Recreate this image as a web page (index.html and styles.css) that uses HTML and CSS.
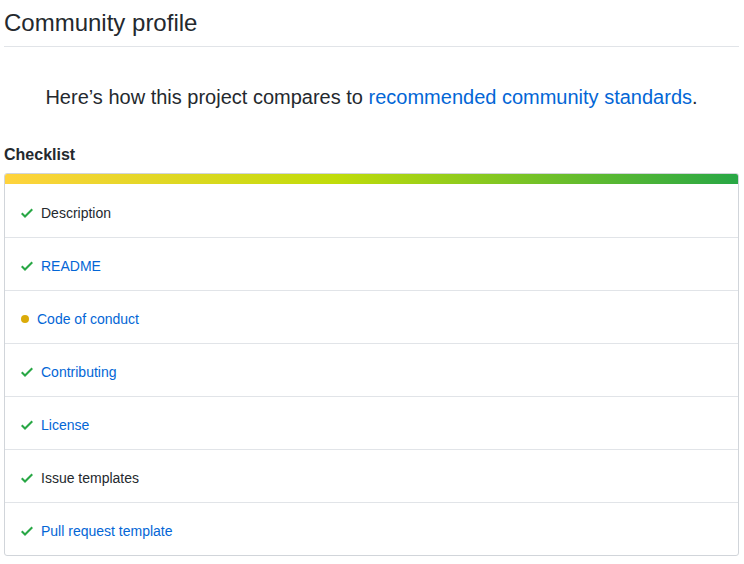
FILE: index.html
```html
<!DOCTYPE html>
<html>
<head>
<meta charset="utf-8">
<link rel="stylesheet" href="styles.css">
</head>
<body>
<div class="page">
  <h2 class="subhead">Community profile</h2>
  <p class="lead">Here’s how this project compares to <a href="#">recommended community standards</a>.</p>
  <h3 class="section-title">Checklist</h3>
  <div class="box">
    <div class="progress"></div>
    <ul class="list">
      <li class="row"><svg class="check" viewBox="0 0 12 16" width="12" height="16"><path d="M12 5l-8 8-4-4 1.5-1.5L4 10l6.5-6.5L12 5z"/></svg><span class="plain">Description</span></li>
      <li class="row"><svg class="check" viewBox="0 0 12 16" width="12" height="16"><path d="M12 5l-8 8-4-4 1.5-1.5L4 10l6.5-6.5L12 5z"/></svg><a href="#">README</a></li>
      <li class="row"><span class="dot"></span><a href="#">Code of conduct</a></li>
      <li class="row"><svg class="check" viewBox="0 0 12 16" width="12" height="16"><path d="M12 5l-8 8-4-4 1.5-1.5L4 10l6.5-6.5L12 5z"/></svg><a href="#">Contributing</a></li>
      <li class="row"><svg class="check" viewBox="0 0 12 16" width="12" height="16"><path d="M12 5l-8 8-4-4 1.5-1.5L4 10l6.5-6.5L12 5z"/></svg><a href="#">License</a></li>
      <li class="row"><svg class="check" viewBox="0 0 12 16" width="12" height="16"><path d="M12 5l-8 8-4-4 1.5-1.5L4 10l6.5-6.5L12 5z"/></svg><span class="plain">Issue templates</span></li>
      <li class="row"><svg class="check" viewBox="0 0 12 16" width="12" height="16"><path d="M12 5l-8 8-4-4 1.5-1.5L4 10l6.5-6.5L12 5z"/></svg><a href="#">Pull request template</a></li>
    </ul>
  </div>
</div>
</body>
</html>
```
FILE: styles.css
```css
html, body {
  margin: 0;
  padding: 0;
  background: #fff;
}
body {
  font-family: "Liberation Sans", Arial, sans-serif;
  color: #24292e;
  font-size: 14px;
}
.page {
  padding: 8px 5px 0 4px;
}
a {
  color: #0366d6;
  text-decoration: none;
}
.subhead {
  margin: 0;
  font-size: 24px;
  font-weight: normal;
  line-height: 30px;
  padding-bottom: 8px;
  border-bottom: 1px solid #e1e4e8;
}
.lead {
  margin: 35px 0 0;
  text-align: center;
  font-size: 20px;
  line-height: 30px;
}
.section-title {
  margin: 33px 0 0;
  font-size: 16px;
  font-weight: bold;
  line-height: 20px;
}
.box {
  margin-top: 8px;
  border: 1px solid #d1d5da;
  border-radius: 3px;
  overflow: hidden;
}
.progress {
  height: 10px;
  background: linear-gradient(to right, #ffd33d 0%, #c0dc0a 45%, #28a745 100%);
}
.list {
  list-style: none;
  margin: 0;
  padding: 0;
}
.row {
  box-sizing: border-box;
  display: flex;
  align-items: center;
  height: 53px;
  padding: 4px 0 0 16px;
  border-top: 1px solid #e1e4e8;
  line-height: 20px;
}
.row:first-child {
  border-top: 0;
  padding-top: 5px;
}
.check {
  fill: #28a745;
  width: 12px;
  height: 16px;
  margin-right: 8px;
}
.dot {
  display: inline-block;
  width: 8px;
  height: 8px;
  border-radius: 50%;
  background: #dbab09;
  margin: 0 8px 0 0;
}
```
